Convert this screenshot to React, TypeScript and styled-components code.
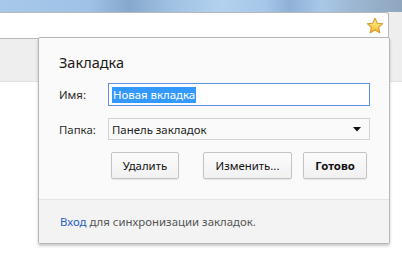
import React from 'react';
import styled, { createGlobalStyle } from 'styled-components';

const GlobalStyle = createGlobalStyle`
  html, body {
    margin: 0;
    padding: 0;
    background: #ffffff;
  }
  body {
    font-family: 'Noto Sans', 'Open Sans', sans-serif;
    font-size: 11.4px;
    color: #222;
  }
`;

const Window = styled.div`
  position: relative;
  width: 402px;
  height: 270px;
  overflow: hidden;
  background: #ffffff;
`;

const GlassStrip = styled.div`
  height: 12px;
  background: linear-gradient(
    90deg,
    #a7c8ea 0%,
    #9fc2e6 22%,
    #86a8cc 32%,
    #9fc0e2 42%,
    #b3d2f0 55%,
    #a6c6e8 66%,
    #8fb1d6 72%,
    #a9c8e8 80%,
    #9db7d2 88%,
    #8fa6bf 100%
  );
`;

const Toolbar = styled.div`
  height: 70px;
  display: flex;
  align-items: flex-start;
  background: #eeeeee;
  border-bottom: 1px solid #e2e2e2;
  box-sizing: border-box;
`;

const Omnibox = styled.div`
  width: 389px;
  height: 27px;
  box-sizing: border-box;
  display: flex;
  align-items: center;
  justify-content: flex-end;
  padding-right: 4px;
  background: #ffffff;
  border: 1px solid #b9b9b9;
  border-left: none;
  border-radius: 0 3px 0 0;
`;

const StarIcon = () => (
  <svg width="18" height="18" viewBox="0 0 18 18">
    <defs>
      <linearGradient id="starFill" x1="0" y1="0" x2="0" y2="1">
        <stop offset="0" stopColor="#fff3a8" />
        <stop offset="0.55" stopColor="#fbd55a" />
        <stop offset="1" stopColor="#f2b72c" />
      </linearGradient>
    </defs>
    <path
      d="M9 1.2 L11.3 6.2 L16.7 6.7 L12.6 10.3 L13.8 15.7 L9 12.9 L4.2 15.7 L5.4 10.3 L1.3 6.7 L6.7 6.2 Z"
      fill="url(#starFill)"
      stroke="#d8992c"
      strokeWidth="1.1"
      strokeLinejoin="round"
    />
  </svg>
);

const Bubble = styled.div`
  position: absolute;
  left: 38px;
  top: 37px;
  width: 352px;
  box-sizing: border-box;
  background: #fafafa;
  border: 1px solid #b7b7b7;
  border-radius: 2px;
  box-shadow: 0 2px 3px rgba(0, 0, 0, 0.22);
  display: flex;
  flex-direction: column;
`;

const BubbleBody = styled.div`
  padding: 14px 19px 20px 20px;
  display: flex;
  flex-direction: column;
`;

const Title = styled.div`
  font-size: 14.5px;
  line-height: 20px;
  color: #1a1a1a;
  margin-bottom: 11px;
`;

const FormRow = styled.div<{ $gap?: number }>`
  display: flex;
  align-items: center;
  margin-bottom: ${(p) => p.$gap ?? 12}px;
`;

const Label = styled.div`
  width: 49px;
  flex-shrink: 0;
  color: #2a2a2a;
`;

const NameField = styled.div`
  flex: 1;
  height: 23px;
  box-sizing: border-box;
  display: flex;
  align-items: center;
  padding-left: 3px;
  background: #ffffff;
  border: 1px solid #5d91e3;
`;

const Selected = styled.span`
  background: #3399ff;
  color: #ffffff;
  line-height: 16px;
  padding: 0 1px;
`;

const FolderSelect = styled.div`
  flex: 1;
  height: 22px;
  box-sizing: border-box;
  display: flex;
  align-items: center;
  justify-content: space-between;
  padding: 0 8px 0 3px;
  background: #fafafa;
  border: 1px solid #d2d2d2;
  color: #222;
`;

const Caret = () => (
  <svg width="8" height="5" viewBox="0 0 8 5">
    <path d="M0 0 H8 L4 4.5 Z" fill="#111" />
  </svg>
);

const ButtonRow = styled.div`
  display: flex;
  justify-content: flex-end;
  gap: 11px;
  margin-right: 3px;
`;

const Button = styled.div<{ $width: number; $bold?: boolean; $space?: number }>`
  width: ${(p) => p.$width}px;
  height: 27px;
  box-sizing: border-box;
  display: flex;
  align-items: center;
  justify-content: center;
  margin-right: ${(p) => p.$space ?? 0}px;
  background: linear-gradient(#fbfbfb, #f1f1f1);
  border: 1px solid #c3c3c3;
  border-radius: 2px;
  box-shadow: 0 1px 1px rgba(0, 0, 0, 0.08);
  font-weight: ${(p) => (p.$bold ? 700 : 400)};
  color: #111;
`;

const Footer = styled.div`
  height: 43px;
  display: flex;
  align-items: center;
  padding-left: 21px;
  background: #f3f3f3;
  border-top: 1px solid #e4e4e4;
  color: #555;
`;

const SignInLink = styled.span`
  color: #2760c8;
`;

const App: React.FC = () => {
  return (
    <>
      <GlobalStyle />
      <Window>
        <GlassStrip />
        <Toolbar>
          <Omnibox>
            <StarIcon />
          </Omnibox>
        </Toolbar>
        <Bubble>
          <BubbleBody>
            <Title>Закладка</Title>
            <FormRow>
              <Label>Имя:</Label>
              <NameField>
                <Selected>Новая вкладка</Selected>
              </NameField>
            </FormRow>
            <FormRow>
              <Label>Папка:</Label>
              <FolderSelect>
                <span>Панель закладок</span>
                <Caret />
              </FolderSelect>
            </FormRow>
            <ButtonRow>
              <Button $width={68} $space={13}>Удалить</Button>
              <Button $width={89}>Изменить...</Button>
              <Button $width={64} $bold>Готово</Button>
            </ButtonRow>
          </BubbleBody>
          <Footer>
            <SignInLink>Вход</SignInLink>&nbsp;для синхронизации закладок.
          </Footer>
        </Bubble>
      </Window>
    </>
  );
};

export default App;
